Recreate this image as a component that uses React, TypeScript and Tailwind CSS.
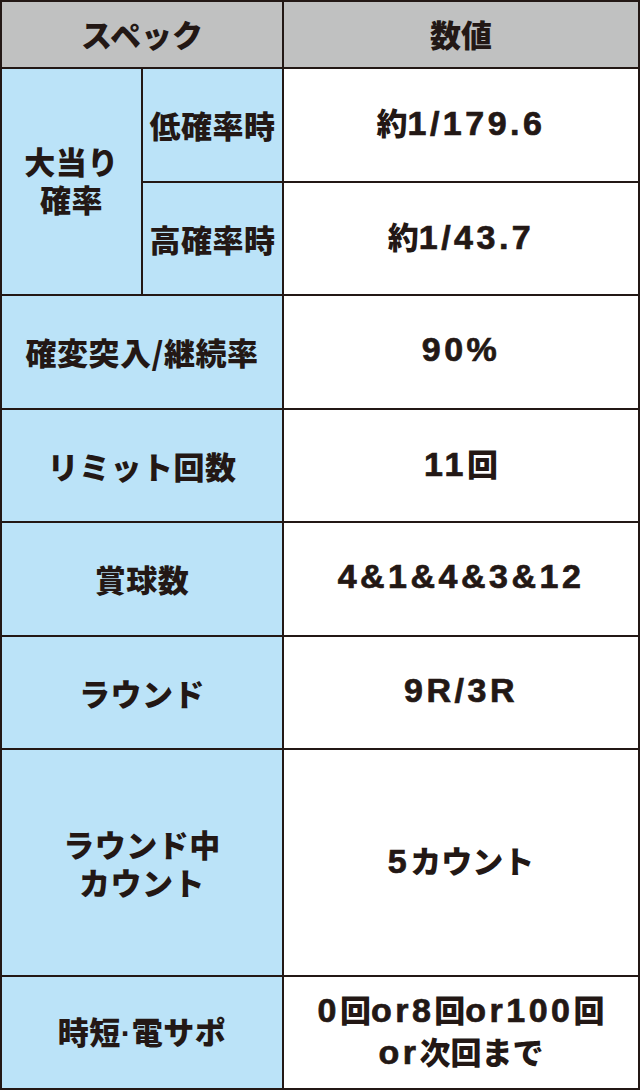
import React from "react";

const cjk = '"Noto Sans CJK JP", "Noto Sans", sans-serif';
const lat = '"Liberation Sans", "Noto Sans CJK JP", sans-serif';

function Cell({ children, className = "" }: { children: React.ReactNode; className?: string }) {
  return (
    <div className={`flex items-center justify-center text-center text-[#231815] ${className}`}>
      {children}
    </div>
  );
}

function Val({ text }: { text: string }) {
  const parts = text.match(/[\x20-\x7e]+|[^\x20-\x7e]+/g) || [];
  return (
    <>
      {parts.map((p, i) =>
        /^[\x20-\x7e]+$/.test(p) ? (
          <span
            key={i}
            style={{ fontFamily: lat }}
            className="font-bold text-[34px] tracking-[3.5px] [-webkit-text-stroke:0.7px_#231815]"
          >
            {p}
          </span>
        ) : (
          <span key={i} style={{ fontFamily: cjk }} className="font-black text-[31px] tracking-[0px]">
            {p}
          </span>
        )
      )}
    </>
  );
}

export default function App() {
  const lbl = "bg-[#bbe3f8] text-[31px] leading-[38px] font-black tracking-[0.5px]";
  const val = "bg-white leading-[35px]";
  return (
    <div style={{ fontFamily: cjk }} className="w-[640px] h-[1092px] bg-white">
      <div
        className="grid bg-[#231815] p-[2px] gap-[2px] w-[640px]"
        style={{
          gridTemplateColumns: "139px 139px 354px",
          gridTemplateRows: "65px 112px 111px 112px 111px 112px 111px 225px 111px",
        }}
      >
        <Cell className="col-span-2 bg-[#c0c1c1] text-[31px] font-black">スペック</Cell>
        <Cell className="bg-[#c0c1c1] text-[31px] font-black">数値</Cell>

        <Cell className={`row-span-2 ${lbl}`}>
          <span className="-mt-[4px]">
            大当り
            <br />
            確率
          </span>
        </Cell>
        <Cell className={lbl}>低確率時</Cell>
        <Cell className={val}>
          <span>
            <Val text="約1/179.6" />
          </span>
        </Cell>
        <Cell className={lbl}>高確率時</Cell>
        <Cell className={val}>
          <span>
            <Val text="約1/43.7" />
          </span>
        </Cell>

        <Cell className={`col-span-2 ${lbl}`}>確変突入/継続率</Cell>
        <Cell className={val}>
          <span>
            <Val text="90%" />
          </span>
        </Cell>

        <Cell className={`col-span-2 ${lbl}`}>リミット回数</Cell>
        <Cell className={val}>
          <span>
            <Val text="11回" />
          </span>
        </Cell>

        <Cell className={`col-span-2 ${lbl}`}>賞球数</Cell>
        <Cell className={val}>
          <span>
            <Val text="4&1&4&3&12" />
          </span>
        </Cell>

        <Cell className={`col-span-2 ${lbl}`}>ラウンド</Cell>
        <Cell className={val}>
          <span>
            <Val text="9R/3R" />
          </span>
        </Cell>

        <Cell className={`col-span-2 ${lbl}`}>
          <span>
            ラウンド中
            <br />
            カウント
          </span>
        </Cell>
        <Cell className={val}>
          <span>
            <Val text="5カウント" />
          </span>
        </Cell>

        <Cell className={`col-span-2 ${lbl}`}>
          <span>
            時短
            <span style={{ fontFamily: lat }} className="font-bold">
              ·
            </span>
            電サポ
          </span>
        </Cell>
        <Cell className={val}>
          <span className="leading-[35px]">
            <Val text="0回or8回or100回" />
            <br />
            <Val text="or次回まで" />
          </span>
        </Cell>
      </div>
    </div>
  );
}
